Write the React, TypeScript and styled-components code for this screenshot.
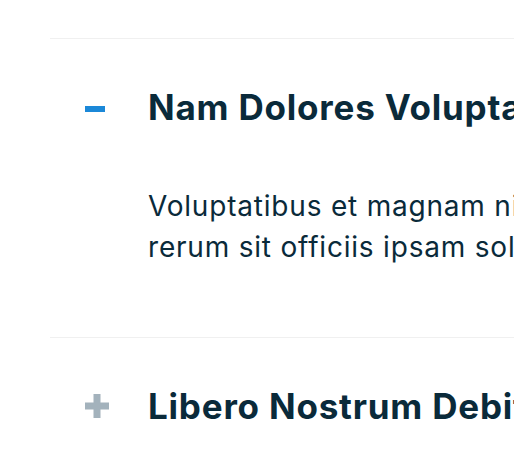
import React from "react";
import styled, { createGlobalStyle } from "styled-components";

const Global = createGlobalStyle`
  html, body { margin: 0; padding: 0; background: #ffffff; overflow: hidden; }
  body { font-family: "Inter", "Liberation Sans", sans-serif; }
`;

const Wrapper = styled.div`
  padding-left: 50px;
  padding-top: 38px;
  width: 1100px;
`;

const Item = styled.section<{ $open?: boolean }>`
  border-top: 1px solid #f0f0f0;
  display: grid;
  grid-template-columns: 98px 1fr;
  padding-top: 48px;
  padding-bottom: ${(p) => (p.$open ? "69px" : "40px")};
`;

const IconCell = styled.div`
  height: 40px;
  display: flex;
  align-items: center;
  padding-left: 35px;
`;

const Title = styled.h2`
  margin: 0;
  font-size: 35px;
  line-height: 40px;
  font-weight: 700;
  letter-spacing: 0.8px;
  color: #0a2a3a;
  white-space: nowrap;
`;

const Body = styled.p`
  grid-column: 2;
  margin: 59px 0 0;
  font-size: 28px;
  line-height: 41px;
  font-weight: 400;
  letter-spacing: 0.8px;
  color: #0a2a3a;
  white-space: pre;
`;

const Minus = () => (
  <svg width="24" height="24" viewBox="0 0 24 24">
    <rect x="0" y="11" width="20" height="6" fill="#1b88d8" />
  </svg>
);

const Plus = () => (
  <svg width="24" height="24" viewBox="0 0 24 24">
    <rect x="8.5" y="0" width="7" height="24" fill="#a3b2bc" />
    <rect x="0" y="8.5" width="24" height="7" fill="#a3b2bc" />
  </svg>
);

export default function App() {
  return (
    <>
      <Global />
      <Wrapper>
        <Item $open>
          <IconCell>
            <Minus />
          </IconCell>
          <Title>Nam Dolores Voluptatem Quas</Title>
          <Body>
            {"Voluptatibus et magnam nihil quaerat ut dolores\nrerum sit officiis ipsam soluta nemo et facilis."}
          </Body>
        </Item>
        <Item>
          <IconCell>
            <Plus />
          </IconCell>
          <Title>Libero Nostrum Debitis Eos</Title>
        </Item>
      </Wrapper>
    </>
  );
}
